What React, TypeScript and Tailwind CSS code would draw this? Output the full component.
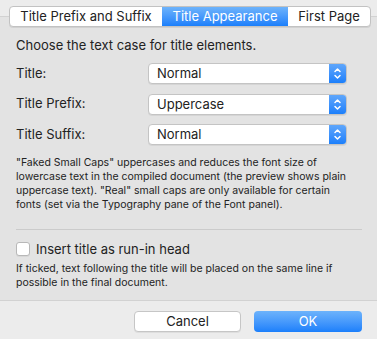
export default function App() {
    const rows = [
        { label: "Title:", value: "Normal" },
        { label: "Title Prefix:", value: "Uppercase" },
        { label: "Title Suffix:", value: "Normal" },
    ];

    return (
        <div
            className="relative w-[377px] h-[339px] bg-[#ececec] text-[#222] overflow-hidden"
            style={{ fontFamily: "Inter, 'Liberation Sans', sans-serif" }}
        >
            {/* Tab box */}
            <div className="mt-[16px] h-[285px] bg-[#e3e3e3] border-t border-b border-[#d2d2d2] flex flex-col px-[16px]">
                <div className="mt-[20px] text-[13px] leading-[16px]">Choose the text case for title elements.</div>

                <div className="mt-[10px] flex flex-col gap-[9.5px]">
                    {rows.map((row, i) => (
                        <div key={i} className="flex items-center h-[21px]">
                            <span className="w-[132px] text-[13px]">{row.label}</span>
                            <div className="flex h-[21px] w-[199px] rounded-[4px] bg-white border border-[#c4c4c4] shadow-[0_1px_0_rgba(0,0,0,0.06)] overflow-hidden">
                                <span className="flex-1 pl-[8px] text-[13px] leading-[19px]">{row.value}</span>
                                <div className="w-[17px] h-full bg-gradient-to-b from-[#5ea6fb] to-[#1a7ffb] flex items-center justify-center">
                                    <svg width="9" height="13" viewBox="0 0 9 13" fill="none" stroke="white" strokeWidth="1.5" strokeLinecap="round" strokeLinejoin="round">
                                        <path d="M2 4.5 L4.5 2 L7 4.5" />
                                        <path d="M2 8.5 L4.5 11 L7 8.5" />
                                    </svg>
                                </div>
                            </div>
                        </div>
                    ))}
                </div>

                <p className="mt-[11px] text-[10.5px] leading-[14px] whitespace-nowrap">
                    "Faked Small Caps" uppercases and reduces the font size of<br />
                    lowercase text in the compiled document (the preview shows plain<br />
                    uppercase text). "Real" small caps are only available for certain<br />
                    fonts (set via the Typography pane of the Font panel).
                </p>

                <div className="mt-[17px] h-px bg-[#cbcbcb] mr-[-1px]" />

                <label className="mt-[12px] flex items-center gap-[6px] h-[14px]">
                    <span className="w-[14px] h-[14px] rounded-[3px] bg-white border border-[#b8b8b8] shadow-[0_1px_0_rgba(0,0,0,0.05)]" />
                    <span className="text-[13px] leading-[16px]">Insert title as run-in head</span>
                </label>

                <p className="mt-[6px] text-[10.5px] leading-[14px] whitespace-nowrap">
                    If ticked, text following the title will be placed on the same line if<br />
                    possible in the final document.
                </p>
            </div>

            {/* Segmented tabs overlapping the box top */}
            <div className="absolute top-[6px] left-[9px] w-[362px] h-[21px] flex rounded-[4px] bg-white border border-[#c2c2c2] shadow-[0_1px_0_rgba(0,0,0,0.08)] overflow-hidden text-[13px]">
                <div className="w-[152px] flex items-center justify-center">Title Prefix and Suffix</div>
                <div className="w-[126px] flex items-center justify-center text-white bg-gradient-to-b from-[#6db3fb] to-[#1a7ffb]">Title Appearance</div>
                <div className="flex-1 flex items-center justify-center">First Page</div>
            </div>

            {/* Buttons */}
            <div className="flex justify-end gap-[13px] pr-[15px] mt-[10px]">
                <button className="w-[107px] h-[21px] rounded-[4px] bg-white border border-[#c6c6c6] shadow-[0_1px_0_rgba(0,0,0,0.06)] text-[13px] text-[#222]">Cancel</button>
                <button className="w-[108px] h-[21px] rounded-[4px] bg-gradient-to-b from-[#6db3fb] to-[#1a7ffb] text-[13px] text-white">OK</button>
            </div>
        </div>
    );
}
